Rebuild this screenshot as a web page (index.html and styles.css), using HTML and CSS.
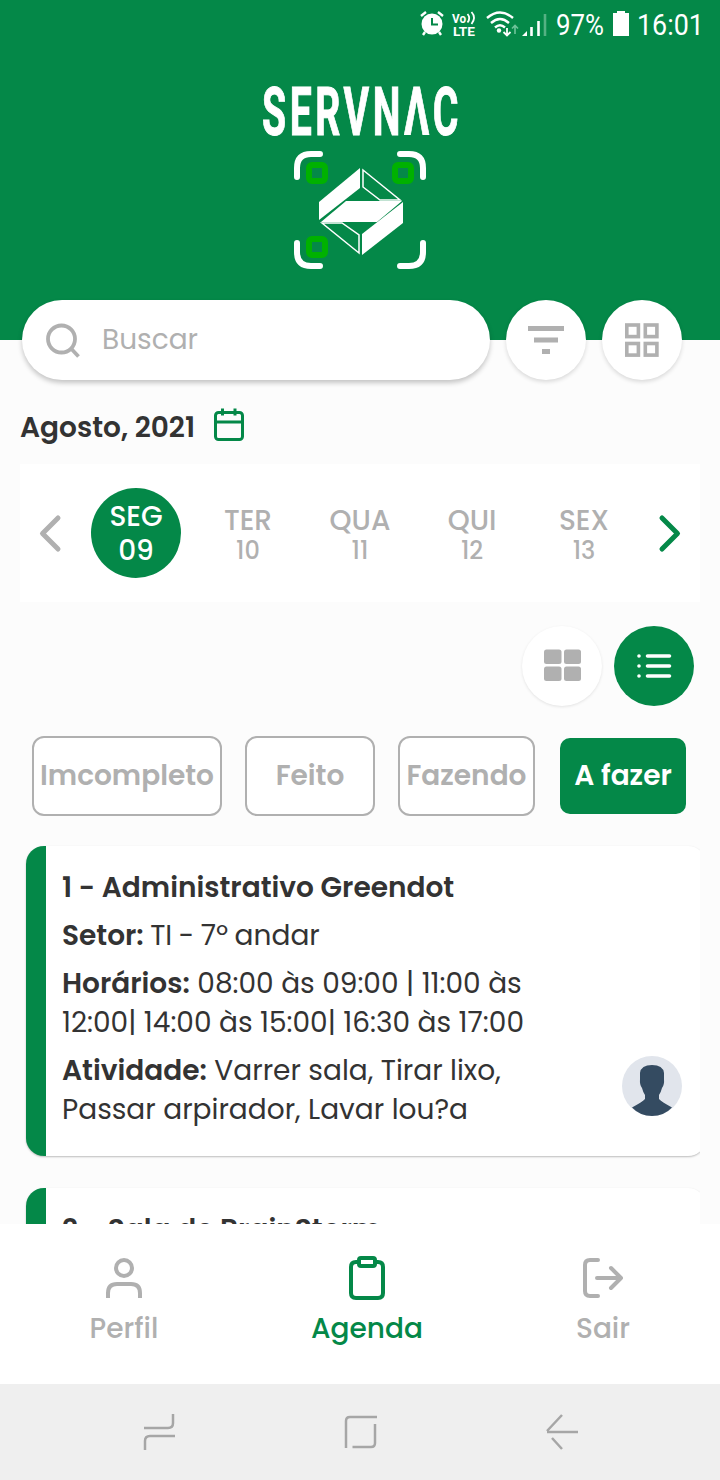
FILE: index.html
```html
<!DOCTYPE html>
<html lang="pt-BR">
<head>
    <meta charset="UTF-8">
    <meta name="viewport" content="width=device-width, initial-scale=1.0">
    <title>Servnac - Agenda</title>
    <link rel="stylesheet" href="styles.css">
</head>
<body>

<div class="app">
    <header class="header">
        <!-- Barra de status -->
        <div class="status-bar">
            <svg class="status-icons" width="132" height="30" viewBox="0 0 132 30">
                <circle cx="13" cy="15" r="10.5" fill="#fff"/>
                <path d="M2 7l5-4M24 7l-5-4M6 23l-2 3M20 23l2 3" stroke="#fff" stroke-width="2.4" fill="none"/>
                <path d="M13 9v6.500h6" stroke="#048848" stroke-width="2" fill="none"/>
                <text class="volte" x="33" y="14" textLength="14" lengthAdjust="spacingAndGlyphs">Vo</text>
                <path d="M48.500 5q3.500 4 0 8.500M52.500 3q5 5.500 0 12" stroke="#fff" stroke-width="1.800" fill="none"/>
                <text class="volte" x="34" y="27" textLength="22" lengthAdjust="spacingAndGlyphs">LTE</text>
                <path d="M68 9q13-11 26 0M72 14q9-8 18 0M76 18.500q5-4.500 10 0" stroke="#fff" stroke-width="2.400" fill="none"/>
                <circle cx="80" cy="21.500" r="2.200" fill="#fff"/>
                <path d="M88 19v7.500M84.500 23l3.500 3.500 3.500-3.500" stroke="#fff" stroke-width="1.800" fill="none"/>
                <path d="M96 25v-8M93 19.500l3-3 3 3" stroke="#6fc39a" stroke-width="1.600" fill="none"/>
                <path d="M103 27h5v-5z" fill="#fff"/>
                <path d="M112.500 27v-9M119.500 27V12" stroke="#fff" stroke-width="2.600"/>
                <path d="M126 27V5" stroke="#55b183" stroke-width="2.600"/>
            </svg>
            <svg class="status-text" width="156" height="38" viewBox="0 0 156 38">
                <text x="5" y="30" textLength="48" lengthAdjust="spacingAndGlyphs">97%</text>
                <path d="M62 8h4V6h8v2h4v23H62z" fill="#fff"/>
                <text x="86" y="30" textLength="67" lengthAdjust="spacingAndGlyphs">16:01</text>
            </svg>
        </div>

        <!-- Logo -->
        <svg class="logo" width="220" height="205" viewBox="0 0 220 205">
            <text class="logo-name" x="12" y="60" textLength="200" lengthAdjust="spacingAndGlyphs">SERVNΛC</text>
            <g fill="none" stroke="#fff" stroke-width="6" stroke-linecap="round">
                <path d="M47 102v-9q0-14 14-14h9"/>
                <path d="M150 79h9q14 0 14 14v9"/>
                <path d="M47 168v9q0 14 14 14h9"/>
                <path d="M150 191h9q14 0 14-14v-9"/>
            </g>
            <g fill="none" stroke="#00b100" stroke-width="6">
                <rect x="59" y="90" width="16" height="16" rx="3"/>
                <rect x="145" y="90" width="16" height="16" rx="3"/>
                <rect x="59" y="164" width="16" height="16" rx="3"/>
            </g>
            <g fill="#fff">
                <path d="M110 93v20L69 145V127z"/>
                <path d="M96 126h56l-25 21H71z"/>
                <path d="M153 127v21l-41 32v-21z"/>
            </g>
            <g fill="none" stroke="#fff" stroke-width="1.500">
                <path d="M113 95l37 30h-20l-17-13z"/>
                <path d="M72 148h20l17 12v18z"/>
            </g>
        </svg>
    </header>

    <!-- Busca -->
    <div class="search-row">
        <label class="search-box">
            <svg width="38" height="38" viewBox="0 0 38 38" fill="none" stroke="#b0b0b0" stroke-width="3.800">
                <circle cx="17.500" cy="18" r="13.500"/>
                <path d="M27 27.500l7.500 8"/>
            </svg>
            <span class="placeholder">Buscar</span>
        </label>
        <button class="round-button">
            <svg width="40" height="40" viewBox="0 0 40 40" fill="#b0b0b0">
                <path d="M2 6h36v5H2zM8 17.500h24v5H8zM16 29h8v5h-8z"/>
            </svg>
        </button>
        <button class="round-button">
            <svg width="40" height="40" viewBox="0 0 40 40" fill="none" stroke="#b0b0b0" stroke-width="3.600">
                <rect x="4.800" y="5" width="11.600" height="11.600"/>
                <rect x="23.300" y="5" width="11.600" height="11.600"/>
                <rect x="4.800" y="23.500" width="11.600" height="11.600"/>
                <rect x="23.300" y="23.500" width="11.600" height="11.600"/>
            </svg>
        </button>
    </div>

    <main class="content">
        <div class="month">
            <h2>Agosto, 2021</h2>
            <svg width="32" height="36" viewBox="0 0 32 36" fill="none" stroke="#048848" stroke-width="3">
                <rect x="2.500" y="5.500" width="27" height="27" rx="3"/>
                <path d="M2.500 15h27M9.500 1.500v7M22 1.500v7"/>
            </svg>
        </div>

        <!-- Dias da semana -->
        <div class="week">
            <svg class="arrow" width="60" height="40" viewBox="0 0 60 40" fill="none" stroke="#b0b0b0" stroke-width="5" stroke-linecap="round" stroke-linejoin="round">
                <path d="M38 5L22.500 20.500 38 36"/>
            </svg>
            <div class="day"><div class="day-active"><span>SEG</span><b>09</b></div></div>
            <div class="day off"><span>TER</span><b>10</b></div>
            <div class="day off"><span>QUA</span><b>11</b></div>
            <div class="day off"><span>QUI</span><b>12</b></div>
            <div class="day off"><span>SEX</span><b>13</b></div>
            <svg class="arrow" width="60" height="40" viewBox="0 0 60 40" fill="none" stroke="#048848" stroke-width="5" stroke-linecap="round" stroke-linejoin="round">
                <path d="M22 5l15.500 15.500L22 36"/>
            </svg>
        </div>

        <div class="views">
            <button class="round-button light">
                <svg width="40" height="40" viewBox="0 0 40 40" fill="#b0b0b0">
                    <rect x="2" y="3.500" width="17.500" height="14.500" rx="2.500"/>
                    <rect x="22" y="3.500" width="17" height="14.500" rx="2.500"/>
                    <rect x="2" y="20.500" width="17.500" height="14.500" rx="2.500"/>
                    <rect x="22" y="20.500" width="17" height="14.500" rx="2.500"/>
                </svg>
            </button>
            <button class="round-button green">
                <svg width="40" height="40" viewBox="0 0 40 40" stroke="#fff" stroke-width="3.600" stroke-linecap="round">
                    <path d="M13.500 10h22M13.500 20h22M13.500 30h22M5 10h.01M5 20h.01M5 30h.01"/>
                </svg>
            </button>
        </div>

        <!-- Filtros -->
        <div class="filters">
            <button class="filter incompleto">Imcompleto</button>
            <button class="filter feito">Feito</button>
            <button class="filter fazendo">Fazendo</button>
            <button class="filter active">A fazer</button>
        </div>

        <!-- Lista de tarefas -->
        <div class="cards">
            <div class="card">
                <div class="card-text">
                    <h3>1 - Administrativo Greendot</h3>
                    <p class="sector"><strong>Setor:</strong> TI - 7º andar</p>
                    <p><strong>Horários:</strong> 08:00 às 09:00 | 11:00 às<br>12:00| 14:00 às 15:00| 16:30 às 17:00</p>
                    <p><strong>Atividade:</strong> Varrer sala, Tirar lixo,<br>Passar arpirador, Lavar lou?a</p>
                </div>
                <svg class="avatar" width="60" height="60" viewBox="0 0 60 60">
                    <circle cx="30" cy="30" r="30" fill="#e1e5ec"/>
                    <path d="M18 23V17q1-8 12-8t12 8v6q.5 6-2 9-1 4-3 7v4q3 3 13 8.500Q42 60 30 60T10 51.500Q20 46 23 43v-4q-2-3-3-7-2.500-3-2-9z" fill="#344b61"/>
                </svg>
            </div>
            <div class="card">
                <div class="card-text">
                    <h3>2 - Sala de BrainStorm</h3>
                </div>
            </div>
        </div>
    </main>

    <nav class="tabs">
        <a class="tab perfil">
            <svg width="48" height="48" viewBox="0 0 48 48" fill="none" stroke="#b0b0b0" stroke-width="4">
                <circle cx="24" cy="14" r="8"/>
                <path d="M8 44v-5q0-9 9-9h14q9 0 9 9v5"/>
            </svg>
            <span>Perfil</span>
        </a>
        <a class="tab agenda">
            <svg width="48" height="48" viewBox="0 0 48 48" fill="none" stroke="#048848" stroke-width="4">
                <path d="M16 8h-3q-5 0-5 5v26q0 5 5 5h22q5 0 5-5V13q0-5-5-5h-3"/>
                <rect x="16" y="4" width="16" height="8" rx="2"/>
            </svg>
            <span>Agenda</span>
        </a>
        <a class="tab sair">
            <svg width="48" height="48" viewBox="0 0 48 48" fill="none" stroke="#b0b0b0" stroke-width="4" stroke-linecap="round" stroke-linejoin="round">
                <path d="M19 6h-8q-5 0-5 5v26q0 5 5 5h8M18 24h24M32 14l10 10-10 10"/>
            </svg>
            <span>Sair</span>
        </a>
    </nav>

    <div class="android-bar">
        <svg width="36" height="40" viewBox="0 0 36 40">
            <path d="M3 16h24q5 0 5-5V2M34 24H9q-5 0-5 5v9"/>
        </svg>
        <svg width="36" height="40" viewBox="0 0 36 40">
            <path d="M3 36V9q0-4 4-4h27M32 12v19q0 4-4 4H9.500"/>
        </svg>
        <svg width="36" height="40" viewBox="0 0 36 40">
            <path d="M34 20H3M18 3L3 19M8 26l10 11"/>
        </svg>
    </div>
</div>

</body>
</html>
```

FILE: styles.css
```css
* {
    box-sizing: border-box;
}
body {
    margin: 0;
    font-family: Poppins, Inter, "Open Sans", sans-serif;
    font-size: 28px;
    color: #333;
    background-color: #fcfcfc;
}
h2, h3, p {
    margin: 0;
    font-size: 28px;
}
h2, h3, strong {
    font-weight: 600;
}
svg {
    display: block;
    flex: none;
}
button {
    border: none;
    padding: 0;
    font-family: inherit;
    font-size: 28px;
}
.app {
    display: flex;
    flex-direction: column;
    width: 720px;
    height: 1480px;
    overflow: hidden;
}

/* Cabeçalho */
.header {
    flex: none;
    height: 340px;
    background-color: #048848;
}
.status-bar {
    display: flex;
    justify-content: flex-end;
    align-items: center;
    height: 48px;
    padding-right: 13px;
}
.volte {
    font: 700 13px Roboto, sans-serif;
    fill: #fff;
}
.status-text text {
    font: 400 30px Roboto, sans-serif;
    fill: #fff;
}
.logo {
    margin: 27px auto 0;
    overflow: visible;
}
.logo-name {
    font: 700 66px Roboto, sans-serif;
    letter-spacing: 6px;
    fill: #fff;
    stroke: #fff;
    stroke-width: 1;
}

/* Busca */
.search-row {
    display: flex;
    flex: none;
    gap: 16px;
    margin-top: -40px;
    padding-left: 22px;
}
.search-box {
    display: flex;
    align-items: center;
    gap: 20px;
    width: 468px;
    height: 80px;
    padding-left: 22px;
    border-radius: 40px;
    background-color: #fff;
    box-shadow: 0 3px 5px rgba(0, 0, 0, 0.22);
}
.placeholder {
    color: #b0b0b0;
}
.round-button {
    display: flex;
    align-items: center;
    justify-content: center;
    width: 80px;
    height: 80px;
    border-radius: 50%;
    background-color: #fff;
    box-shadow: 0 2px 4px rgba(0, 0, 0, 0.14);
}
.round-button.light {
    box-shadow: 0 1px 3px rgba(0, 0, 0, 0.1);
}
.round-button.green {
    background-color: #048848;
    box-shadow: none;
}

/* Mês e semana */
.content {
    flex: 1;
    min-height: 0;
    overflow: hidden;
    padding: 24px 20px 0;
}
.month {
    display: flex;
    align-items: center;
    gap: 18px;
    height: 42px;
}
.month h2 {
    padding-top: 6px;
}
.week {
    display: flex;
    align-items: center;
    height: 138px;
    margin-top: 18px;
    background-color: #fff;
}
.day {
    display: flex;
    flex-direction: column;
    align-items: center;
    width: 112px;
    line-height: 30px;
    color: #b0b0b0;
}
.day.off {
    padding-top: 5px;
}
.day span, .day b {
    font-weight: 500;
}
.day b {
    font-size: 24px;
}
.day-active {
    display: flex;
    flex-direction: column;
    align-items: center;
    justify-content: center;
    width: 90px;
    height: 90px;
    padding-top: 1px;
    border-radius: 50%;
    line-height: 34px;
    color: #fff;
    background-color: #048848;
}
.day .day-active b {
    font-size: 28px;
}
.views {
    display: flex;
    justify-content: flex-end;
    gap: 12px;
    margin-top: 24px;
    padding-right: 6px;
}

/* Filtros */
.filters {
    display: flex;
    align-items: center;
    height: 80px;
    margin-top: 30px;
    padding-left: 12px;
}
.filter {
    height: 80px;
    border: 2px solid #b0b0b0;
    border-radius: 12px;
    font-weight: 600;
    color: #b0b0b0;
    background-color: #fff;
}
.filter.incompleto {
    width: 190px;
}
.filter.feito {
    width: 130px;
    margin-left: 23px;
}
.filter.fazendo {
    width: 137px;
    margin-left: 23px;
}
.filter.active {
    width: 126px;
    height: 76px;
    margin-left: 25px;
    border: none;
    border-radius: 10px;
    color: #fff;
    background-color: #048848;
}

/* Cartões */
.cards {
    margin-top: 28px;
    padding: 2px 0 0 6px;
    overflow: hidden;
}
.card {
    display: flex;
    justify-content: space-between;
    align-items: flex-end;
    width: 680px;
    height: 310px;
    margin-bottom: 32px;
    padding: 22px 24px 0 16px;
    border-left: 20px solid #048848;
    border-radius: 18px;
    background-color: #fff;
    box-shadow: 0 1px 2px rgba(0, 0, 0, 0.25);
}
.card-text {
    align-self: flex-start;
    line-height: 39px;
    white-space: nowrap;
}
.card-text p {
    margin-top: 9px;
}
.card-text .sector {
    word-spacing: -1px;
}
.avatar {
    margin-bottom: 40px;
}

/* Menu inferior */
.tabs {
    display: flex;
    flex: none;
    height: 160px;
    padding-top: 30px;
    background-color: #fff;
}
.tab {
    display: flex;
    flex-direction: column;
    align-items: center;
    font-weight: 500;
    color: #b0b0b0;
}
.tab span {
    margin-top: 10px;
    line-height: 34px;
}
.tab.perfil {
    width: 248px;
}
.tab.agenda {
    width: 238px;
    color: #048848;
}
.tab.sair {
    width: 234px;
}
.android-bar {
    display: flex;
    flex: none;
    align-items: center;
    justify-content: space-between;
    height: 96px;
    padding: 0 140px 0 141px;
    background-color: #efefef;
}
.android-bar path {
    fill: none;
    stroke: #a6a6a6;
    stroke-width: 2.5;
}
```
